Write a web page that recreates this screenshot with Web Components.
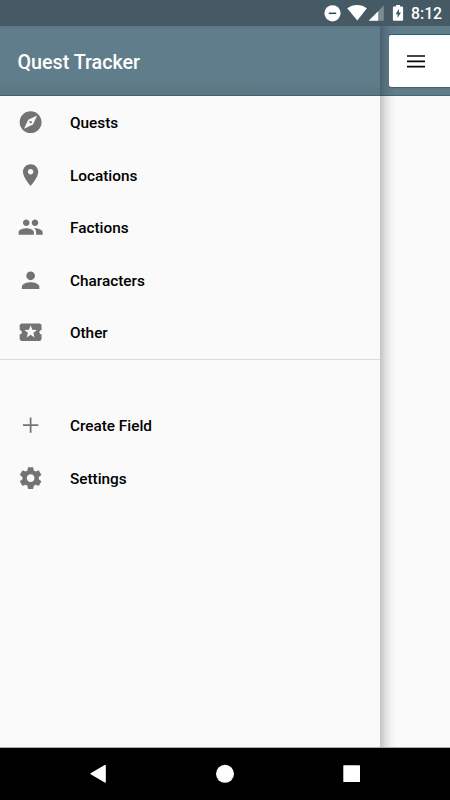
<!DOCTYPE html>
<html lang="en">
<head>
<meta charset="utf-8">
<meta name="viewport" content="width=device-width">
<title>Quest Tracker</title>
<style>
html,body{margin:0;height:100%;overflow:hidden}
body{font-family:Roboto,"Liberation Sans",sans-serif}
</style>
</head>
<body>
<quest-app></quest-app>
<script>
const define=(name,html)=>customElements.define(name,class extends HTMLElement{
  constructor(){super();this.attachShadow({mode:'open'}).innerHTML=html;}
});

const ICONS={
  explore:'M12 10.9c-.61 0-1.1.49-1.1 1.1s.49 1.1 1.1 1.1c.61 0 1.1-.49 1.1-1.1s-.49-1.1-1.1-1.1zM12 2C6.48 2 2 6.48 2 12s4.48 10 10 10 10-4.48 10-10S17.52 2 12 2zm2.19 12.19L6 18l3.81-8.19L18 6l-3.81 8.19z',
  place:'M12 2C8.13 2 5 5.13 5 9c0 5.25 7 13 7 13s7-7.75 7-13c0-3.87-3.13-7-7-7zm0 9.5c-1.38 0-2.5-1.12-2.5-2.5s1.12-2.5 2.5-2.5 2.5 1.12 2.5 2.5-1.12 2.5-2.5 2.5z',
  group:'M16 11c1.66 0 2.99-1.34 2.99-3S17.66 5 16 5c-1.66 0-3 1.34-3 3s1.34 3 3 3zm-8 0c1.66 0 2.99-1.34 2.99-3S9.66 5 8 5C6.34 5 5 6.34 5 8s1.34 3 3 3zm0 2c-2.33 0-7 1.17-7 3.5V19h14v-2.5c0-2.33-4.67-3.5-7-3.5zm8 0c-.29 0-.62.02-.97.05 1.16.84 1.97 1.97 1.97 3.45V19h6v-2.5c0-2.33-4.67-3.5-7-3.5z',
  person:'M12 12c2.21 0 4-1.79 4-4s-1.79-4-4-4-4 1.79-4 4 1.79 4 4 4zm0 2c-2.67 0-8 1.34-8 4v2h16v-2c0-2.66-5.33-4-8-4z',
  ticket:'M20 12c0-1.1.9-2 2-2V6c0-1.1-.9-2-2-2H4c-1.1 0-1.99.9-1.99 2v4c1.1 0 1.99.9 1.99 2s-.89 2-2 2v4c0 1.1.9 2 2 2h16c1.1 0 2-.9 2-2v-4c-1.1 0-2-.9-2-2zm-4.42 4.8L12 14.5l-3.58 2.3 1.08-4.12-3.29-2.69 4.24-.25L12 5.8l1.54 3.95 4.24.25-3.29 2.69 1.09 4.11z',
  add:'M19 12.8h-6.2v6.2h-1.6v-6.2H5v-1.6h6.2V5h1.6v6.2H19z',
  settings:'M19.43 12.98c.04-.32.07-.64.07-.98s-.03-.66-.07-.98l2.11-1.65c.19-.15.24-.42.12-.64l-2-3.46c-.12-.22-.39-.3-.61-.22l-2.49 1c-.52-.4-1.08-.73-1.69-.98l-.38-2.65C14.46 2.18 14.25 2 14 2h-4c-.25 0-.46.18-.49.42l-.38 2.65c-.61.25-1.17.59-1.69.98l-2.49-1c-.23-.09-.49 0-.61.22l-2 3.46c-.13.22-.07.49.12.64l2.11 1.65c-.04.32-.07.65-.07.98s.03.66.07.98l-2.11 1.65c-.19.15-.24.42-.12.64l2 3.46c.12.22.39.3.61.22l2.49-1c.52.4 1.08.73 1.69.98l.38 2.65c.03.24.24.42.49.42h4c.25 0 .46-.18.49-.42l.38-2.65c.61-.25 1.17-.59 1.69-.98l2.49 1c.23.09.49 0 .61-.22l2-3.46c.12-.22.07-.49-.12-.64l-2.11-1.65zM12 15.5c-1.93 0-3.5-1.57-3.5-3.5s1.57-3.5 3.5-3.5 3.5 1.57 3.5 3.5-1.57 3.5-3.5 3.5z'
};
customElements.define('md-icon',class extends HTMLElement{
  connectedCallback(){
    if(this.shadowRoot)return;
    this.attachShadow({mode:'open'}).innerHTML=`<style>:host{display:block;width:26.25px;height:26.25px}svg{display:block;width:100%;height:100%;fill:currentColor}</style><svg viewBox="-0.45 0 24 24"><path d="${ICONS[this.getAttribute('name')]}"/></svg>`;
  }
});

define('nav-item',`<style>
:host{display:flex;align-items:center;gap:26.5px;height:52.5px;padding-left:17.2px;box-sizing:border-box;font-size:15.35px;font-weight:500;color:#000}
::slotted(md-icon){color:#737373}
.label{line-height:20px;padding-top:1.6px}
</style><slot name="icon"></slot><span class="label"><slot></slot></span>`);

define('status-bar',`<style>
:host{display:block;height:26px;background:#455a64;color:#fff}
.row{display:flex;height:26px;justify-content:flex-end;align-items:center;padding-right:8.5px}
svg{display:block;width:82px;height:26px}
.time{font-size:15.8px;font-weight:500;line-height:26px;padding-top:1px;margin-left:5.5px;width:30.5px;white-space:nowrap}
</style><div class="row"><svg viewBox="324 0 82 26">
<circle cx="332.5" cy="13.3" r="8.1" fill="#fff"/><path d="M328.8 13.3h7.4" stroke="#2f4954" stroke-width="1.5"/>
<path fill="#fff" d="M347.2 8.3c5.6-4.5 14.1-4.5 19.7 0L357.3 20.5z"/>
<path fill="#fff" fill-opacity=".3" d="M383.8 5.6v15.1h-15.1z"/><path fill="#fff" d="M378.2 11.2v9.5h-9.5z"/>
<path fill="#fff" fill-rule="evenodd" d="M396 5h4v1.6h2c.7 0 1.1.4 1.1 1.1v12c0 .7-.4 1.1-1.1 1.1h-8c-.7 0-1.1-.4-1.1-1.1v-12c0-.7.4-1.1 1.1-1.1h2zM399 8.8l-3.4 5.5h2v3.8l3.4-5.5H399z"/>
</svg><span class="time">8:12</span></div>`);

define('menu-button',`<style>
:host{display:flex;align-items:center;width:61px;height:52px;box-sizing:border-box;padding-left:18px;background:#fff;border-radius:2px 0 0 2px;box-shadow:0 -1px 0 #286078,0 1px 1px rgba(0,0,0,.25)}
svg{display:block;width:18px;height:14px}
</style><svg viewBox="0 0 18 14"><path d="M0 2h18M0 7.4h18M0 12.6h18" stroke="#080808" stroke-width="1.7"/></svg>`);

define('app-content',`<style>
:host{display:block;background:#fafafa;position:relative}
.bar{height:70px;background:#607d8b;box-sizing:border-box;border-bottom:1px solid #456677;padding:9px 0 0 9px}
.shade{position:absolute;inset:0 auto 0 0;width:16px;background:linear-gradient(90deg,rgba(0,0,0,.22),rgba(0,0,0,.1) 35%,rgba(0,0,0,.03) 70%,transparent);pointer-events:none}
menu-button{position:relative;z-index:1}
</style><div class="bar"><menu-button></menu-button></div><div class="shade"></div>`);

define('nav-drawer',`<style>
:host{display:block;background:#fafafa}
header{height:70px;box-sizing:border-box;border-bottom:1px solid #3f6174;background:linear-gradient(#5c7784,#607d8b 5px,#607d8b 52px,#5c7682);display:flex;align-items:center;padding:3.5px 0 0 17.5px;color:#fff;font-size:19.7px;font-weight:500}
.secondary{border-top:1px solid #dadada;padding-top:39.3px}
.primary{height:263px}
</style><header><slot name="title"></slot></header>
<div class="primary"><slot></slot></div><div class="secondary"><slot name="secondary"></slot></div>`);

define('system-nav',`<style>
:host{display:block;height:53px;background:#000;border-top:1px solid #aaa;box-sizing:border-box}
svg{display:block;width:100%;height:52px;fill:#fff}
</style><svg viewBox="0 748 450 52"><path d="M90.6 773.3Q90 773.8 90.6 774.3L104.7 782.6Q105.8 783 105.8 782V765.6Q105.8 764.7 104.7 765.1z"/><circle cx="225" cy="773.8" r="9"/><rect x="343.3" y="765.3" width="16.7" height="16.7" rx=".6"/></svg>`);

define('quest-app',`<style>
:host{display:grid;grid-template-rows:26px 721px 53px;width:450px;height:800px;overflow:hidden}
main{display:grid;grid-template-columns:380px 70px}
</style><status-bar></status-bar><main>
<nav-drawer><span slot="title">Quest Tracker</span>
<nav-item><md-icon slot="icon" name="explore"></md-icon>Quests</nav-item>
<nav-item><md-icon slot="icon" name="place"></md-icon>Locations</nav-item>
<nav-item><md-icon slot="icon" name="group"></md-icon>Factions</nav-item>
<nav-item><md-icon slot="icon" name="person"></md-icon>Characters</nav-item>
<nav-item><md-icon slot="icon" name="ticket"></md-icon>Other</nav-item>
<nav-item slot="secondary"><md-icon slot="icon" name="add"></md-icon>Create Field</nav-item>
<nav-item slot="secondary"><md-icon slot="icon" name="settings"></md-icon>Settings</nav-item>
</nav-drawer><app-content></app-content></main><system-nav></system-nav>`);
</script>
</body>
</html>
